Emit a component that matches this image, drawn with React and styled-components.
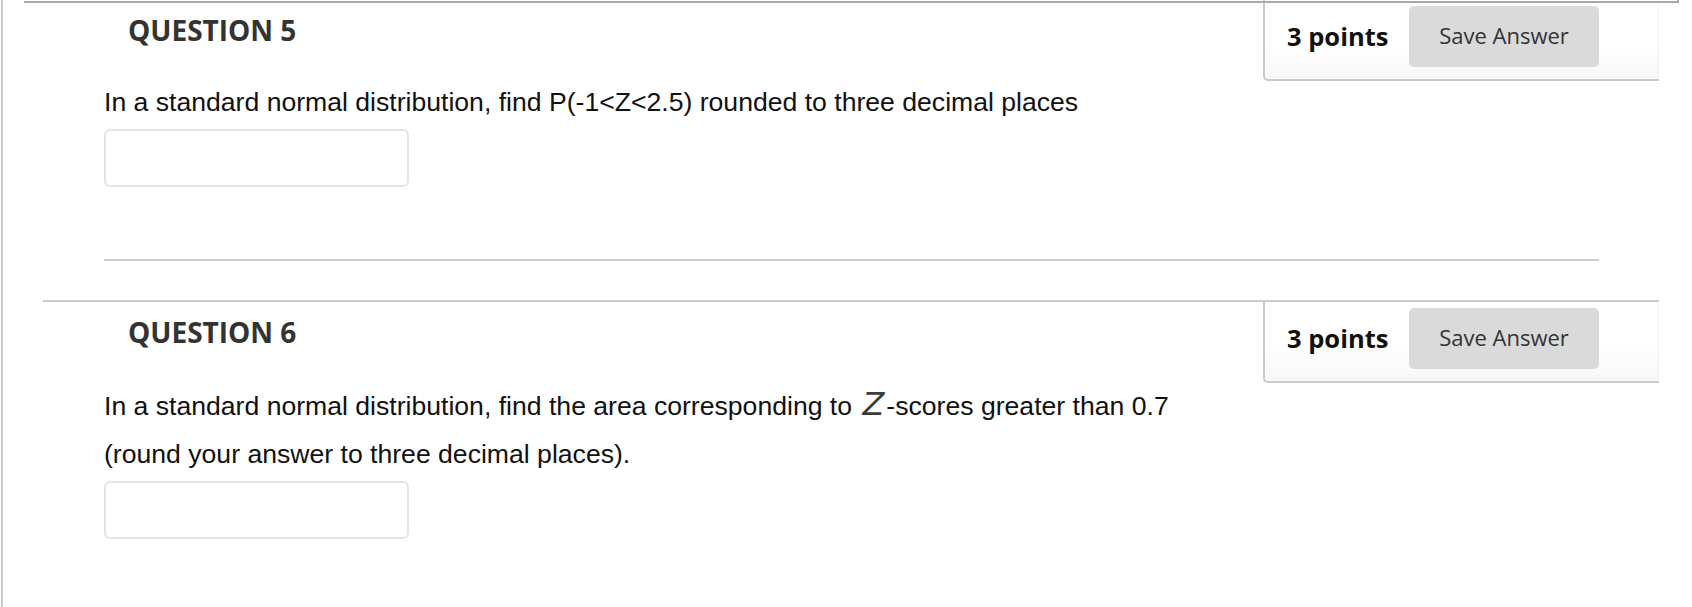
import React from 'react'
import styled, { createGlobalStyle } from 'styled-components';

const GlobalStyle = createGlobalStyle`
  html, body {
    margin: 0;
    padding: 0;
    background: #fff;
    overflow: hidden;
  }
  body {
    font-family: "Liberation Sans", Arial, sans-serif;
  }
`

const Page = styled.div`
  margin-left: 1px;
  border-left: 2px solid #cbcbcb;
  min-height: 607px;
  box-sizing: border-box;
`

// bottom edge of the previous item, still peeking in at the top
const PrevEdge = styled.div`
  position: relative;
  z-index: 1;
  margin-left: 21px;
  width: 1653px;
  height: 1px;
  border-bottom: 2px solid #a9a9a9;
  border-right: 2px solid #a9a9a9;
  margin-bottom: -5px;
`

const Question = styled.div`
  margin-left: 40px;
  width: 1616px;
  border-top: 2px solid #cbcbcb;
  margin-bottom: 39px;
`

const Header = styled.div`
  display: flex;
  justify-content: space-between;
  align-items: flex-start;
`

const Title = styled.h3`
  margin: 11px 0 0 85px;
  font-family: "Open Sans", sans-serif;
  font-weight: 700;
  font-size: 28px;
  line-height: normal;
  color: #333;
`

const PointsBox = styled.div`
  width: 396px;
  box-sizing: border-box;
  display: flex;
  align-items: center;
  justify-content: space-between;
  padding: 6px 60px 12px 22px;
  border-left: 2px solid #cbcbcb;
  border-bottom: 2px solid #cbcbcb;
  border-bottom-left-radius: 5px;
  background: linear-gradient(to bottom, #fff 55%, #f7f7f7);
  box-shadow: inset -2px 0 2px -1px #f2f2f2;
`

const Points = styled.span`
  margin-top: -2px;
  font-family: "Open Sans", sans-serif;
  font-weight: 700;
  font-size: 25.5px;
  color: #111;
`

const SaveButton = styled.button`
  width: 190px;
  height: 61px;
  border: none;
  border-radius: 5px;
  background: #dadada;
  font-family: "Open Sans", sans-serif;
  font-size: 22px;
  color: #333;
  padding: 0 0 3px;
`

const Body = styled.div`
  padding: 0 60px 0 61px;
`

const Prompt = styled.div`
  margin-top: -3px;
  font-family: "Liberation Sans", Arial, sans-serif;
  font-size: 26.6px;
  line-height: 48px;
  color: #111;
`

const MathVar = styled.span`
  font-family: "DejaVu Sans", sans-serif;
  font-style: italic;
  font-size: 32px;
  color: #3a3a3a;
  padding: 0 2px 0 3px;
`

const AnswerInput = styled.input`
  display: block;
  margin-top: 3px;
  width: 305px;
  height: 58px;
  box-sizing: border-box;
  border: 2px solid #e4e4e4;
  border-radius: 6px;
  background: #fff;
  outline: none;
`

const Divider = styled.hr`
  margin: 72px 0 0;
  border: none;
  border-top: 2px solid #cbcbcb;
`

const QuestionBlock = ({ number, points, children }) => (
  <Question>
    <Header>
      <Title>QUESTION {number}</Title>
      <PointsBox>
        <Points>{points} points</Points>
        <SaveButton>Save Answer</SaveButton>
      </PointsBox>
    </Header>
    <Body>
      <Prompt>{children}</Prompt>
      <AnswerInput type="text" />
      <Divider />
    </Body>
  </Question>
)

export default function App() {
  return (
    <>
      <GlobalStyle />
      <Page>
        <PrevEdge />
        <QuestionBlock number={5} points={3}>
          In a standard normal distribution, find P(-1&lt;Z&lt;2.5) rounded to three decimal places
        </QuestionBlock>
        <QuestionBlock number={6} points={3}>
          In a standard normal distribution, find the area corresponding to <MathVar>Z</MathVar>-scores greater than 0.7
          <br />
          (round your answer to three decimal places).
        </QuestionBlock>
      </Page>
    </>
  )
}
